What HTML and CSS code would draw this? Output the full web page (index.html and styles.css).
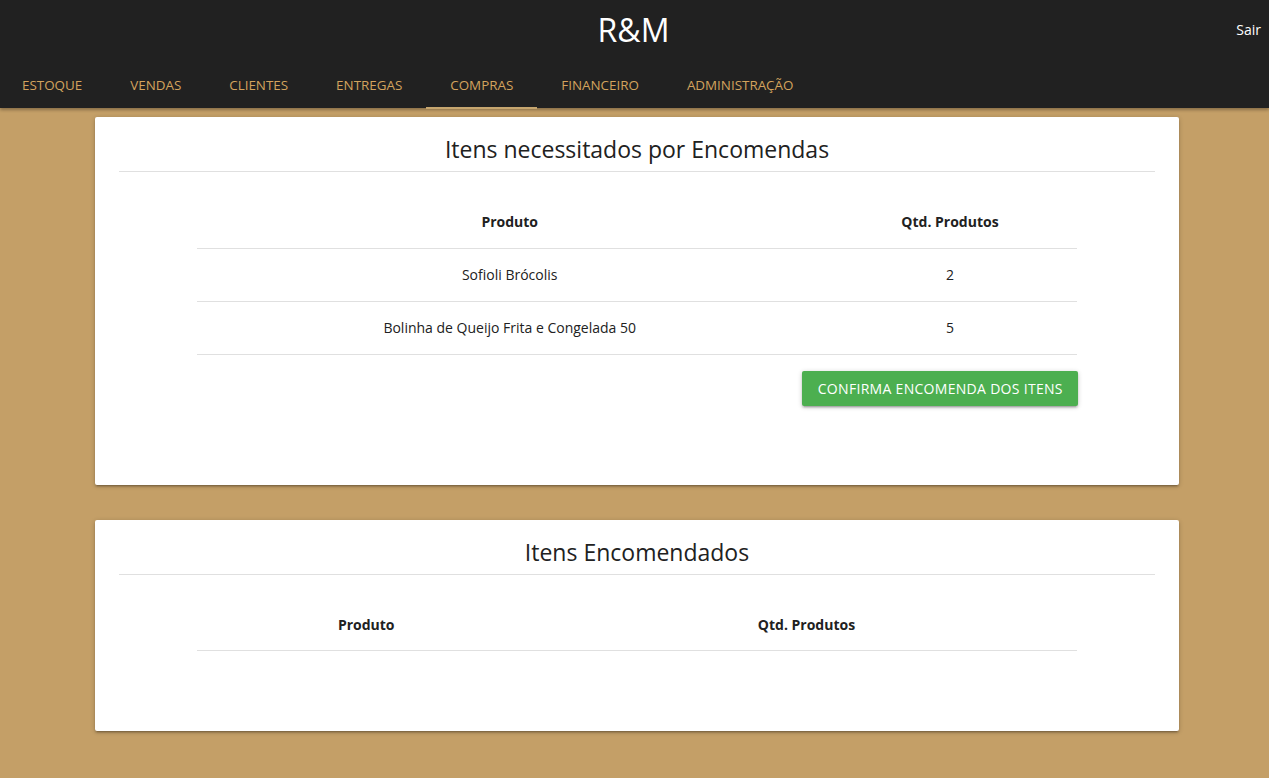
FILE: index.html
```html
<!DOCTYPE html>
<html lang="pt-BR">
<head>
<meta charset="utf-8">
<title>R&amp;M</title>
<link rel="stylesheet" href="styles.css">
</head>
<body>
<header class="topbar">
  <div class="brand-row">
    <div class="brand">R&amp;M</div>
    <a class="logout" href="#">Sair</a>
  </div>
  <nav class="tabs">
    <a class="tab" href="#">ESTOQUE</a>
    <a class="tab" href="#">VENDAS</a>
    <a class="tab" href="#">CLIENTES</a>
    <a class="tab" href="#">ENTREGAS</a>
    <a class="tab active" href="#">COMPRAS</a>
    <a class="tab" href="#">FINANCEIRO</a>
    <a class="tab" href="#">ADMINISTRAÇÃO</a>
  </nav>
</header>
<main class="content">
  <section class="card">
    <h2 class="card-title">Itens necessitados por Encomendas</h2>
    <hr class="divider">
    <table class="data-table">
      <thead>
        <tr><th class="col-a1">Produto</th><th>Qtd. Produtos</th></tr>
      </thead>
      <tbody>
        <tr><td>Sofioli Brócolis</td><td>2</td></tr>
        <tr><td>Bolinha de Queijo Frita e Congelada 50</td><td>5</td></tr>
      </tbody>
    </table>
    <div class="actions">
      <button class="btn">Confirma encomenda dos itens</button>
    </div>
  </section>
  <section class="card card-second">
    <h2 class="card-title">Itens Encomendados</h2>
    <hr class="divider">
    <table class="data-table">
      <thead>
        <tr><th class="col-b1">Produto</th><th>Qtd. Produtos</th></tr>
      </thead>
      <tbody></tbody>
    </table>
  </section>
</main>
</body>
</html>
```
FILE: styles.css
```css
* { box-sizing: border-box; }
html, body { margin: 0; padding: 0; }
body {
  background: #c49f67;
  font-family: "Open Sans", "Noto Sans", sans-serif;
  color: #212121;
  min-height: 778px;
}
.topbar {
  background: #212121;
  height: 108px;
  box-shadow: 0 2px 3px rgba(0,0,0,0.3);
  position: relative;
  z-index: 2;
}
.brand-row {
  height: 62px;
  display: flex;
  align-items: center;
  justify-content: center;
  position: relative;
}
.brand {
  color: #fff;
  font-size: 32px;
  line-height: 62px;
  margin-top: -2px;
  margin-left: -2px;
}
.logout {
  position: absolute;
  right: 8px;
  top: 0;
  line-height: 60px;
  color: #fff;
  font-size: 14px;
  text-decoration: none;
}
.tabs {
  display: flex;
  height: 46px;
  margin-left: -2px;
}
.tab {
  display: block;
  padding: 0 24px;
  height: 46px;
  line-height: 46px;
  color: #d3a35d;
  font-size: 13.4px;
  text-decoration: none;
  position: relative;
}
.tab.active::after {
  content: "";
  position: absolute;
  left: 0; right: 0; bottom: -1px;
  height: 2px;
  background: #c6a66f;
}
.content {
  padding: 9px 90px 40px 95px;
}
.card {
  background: #fff;
  width: 1084px;
  border-radius: 2px;
  padding: 14px 24px 79px;
  box-shadow: 0 2px 2px 0 rgba(0,0,0,0.14), 0 3px 1px -2px rgba(0,0,0,0.12), 0 1px 5px 0 rgba(0,0,0,0.2);
}
.card-second {
  margin-top: 35px;
  padding-bottom: 80px;
}
.card-title {
  margin: 0;
  text-align: center;
  font-size: 23px;
  font-weight: 400;
  line-height: 36px;
  color: #212121;
}
.divider {
  border: 0;
  border-top: 1px solid #e0e0e0;
  margin: 4px 0 24px;
  height: 0;
}
.data-table {
  width: 85%;
  margin: 0 auto;
  border-collapse: collapse;
  font-size: 14px;
}
.data-table th, .data-table td {
  text-align: center;
  height: 52px;
  padding: 0;
  border-bottom: 1px solid #e0e0e0;
}
.data-table th { font-weight: 700; }
.data-table tbody tr td { height: 53px; }
.col-a1 { width: 626px; }
.col-b1 { width: 339px; }
.actions {
  width: 85%;
  margin: 16px auto 0;
  display: flex;
  justify-content: flex-end;
}
.btn {
  background: #4caf50;
  color: #fff;
  border: 0;
  border-radius: 2px;
  height: 35px;
  width: 276px;
  margin-right: -1px;
  font-family: inherit;
  font-size: 14px;
  text-transform: uppercase;
  letter-spacing: 0.3px;
  box-shadow: 0 2px 2px 0 rgba(0,0,0,0.14), 0 3px 1px -2px rgba(0,0,0,0.12), 0 1px 5px 0 rgba(0,0,0,0.2);
  cursor: pointer;
}
```
